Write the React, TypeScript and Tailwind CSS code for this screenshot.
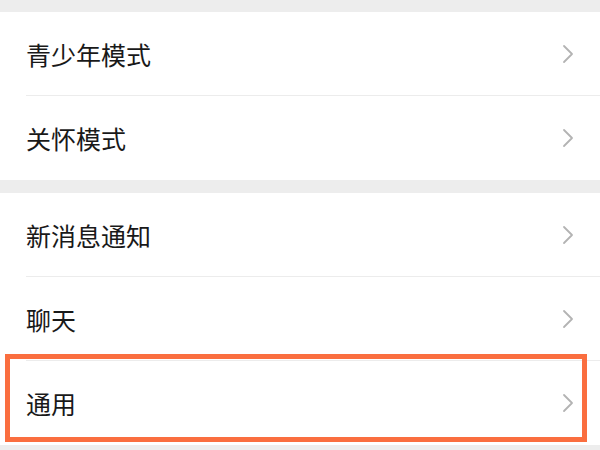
import React from 'react';

const Chevron = () => (
  <svg width="12" height="20" viewBox="0 0 12 20" fill="none" className="shrink-0">
    <path d="M2 2l8 8-8 8" stroke="#b3b3b3" strokeWidth="1.8" strokeLinecap="round" strokeLinejoin="round" />
  </svg>
);

const Row: React.FC<{ label: string; divider?: boolean; highlight?: boolean }> = ({ label, divider, highlight }) => (
  <div className="relative h-[84px] flex items-center pl-[26px] pr-[26px]">
    <span className="flex-1 text-[25px] text-[#191919] leading-none">{label}</span>
    <Chevron />
    {divider && <div className="absolute left-[26px] right-0 bottom-0 h-px bg-[#ececec]" />}
    {highlight && (
      <div className="absolute top-[-7px] bottom-[3px] left-[5px] right-[13px] border-[5px] border-[#fa6e3f]" />
    )}
  </div>
);

export default function App() {
  return (
    <div
      className="w-[600px] h-[450px] overflow-hidden bg-[#ededed] flex flex-col"
      style={{ fontFamily: '"Noto Sans CJK SC", "Noto Sans", sans-serif' }}
    >
      <div className="h-[12px] shrink-0" />
      <div className="bg-white">
        <Row label="青少年模式" divider />
        <Row label="关怀模式" />
      </div>
      <div className="h-[13px] shrink-0" />
      <div className="bg-white">
        <Row label="新消息通知" divider />
        <Row label="聊天" divider />
        <Row label="通用" highlight />
      </div>
    </div>
  );
}
